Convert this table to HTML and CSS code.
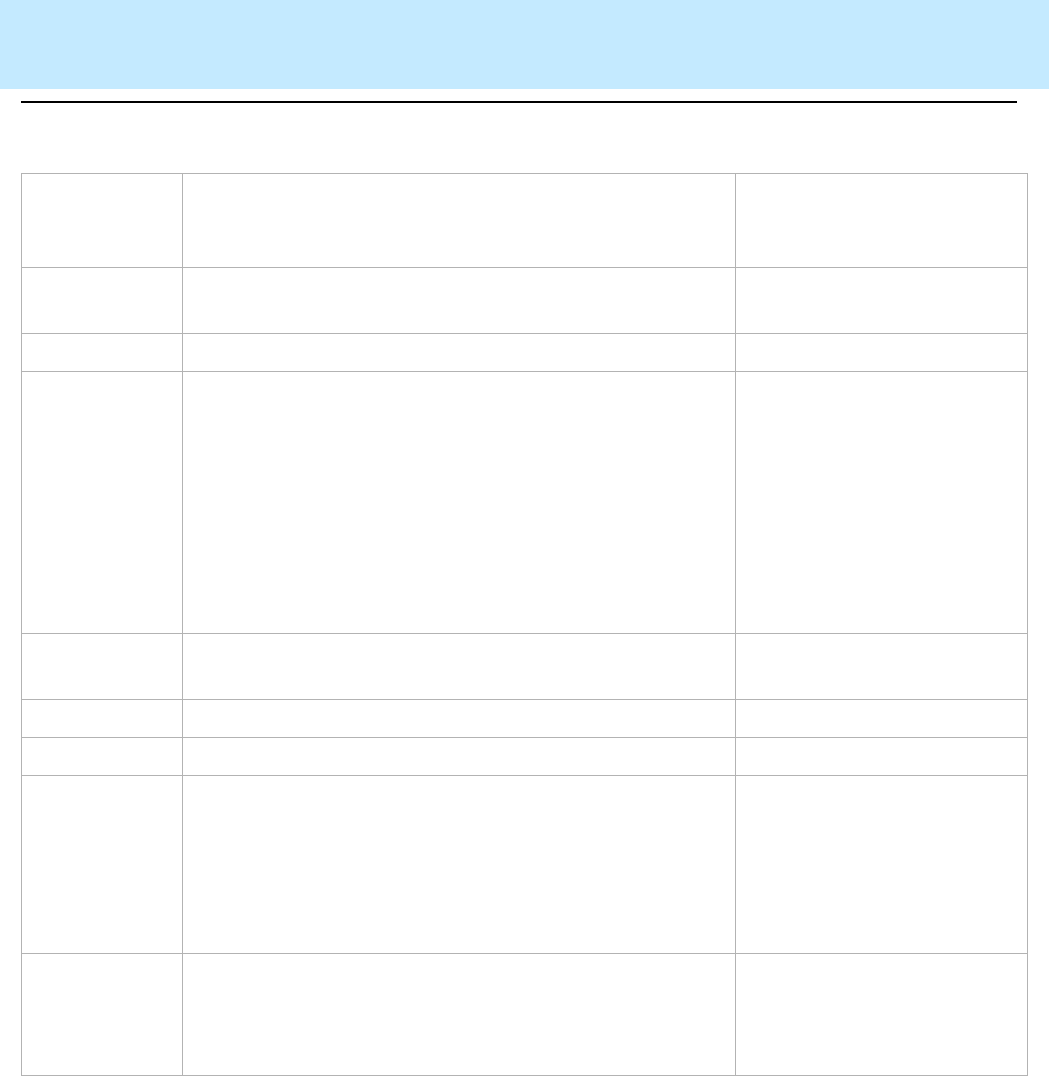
FILE: index.html
```html
<!DOCTYPE html>
<html lang="en">
<head>
    <meta charset="UTF-8">
    <title>Table</title>
    <link rel="stylesheet" href="styles.css">
</head>
<body>

<div class="top"></div>
<div class="rule"></div>

<table class="grid">
    <tr class="h94"><td class="c1"></td><td class="c2"></td><td class="c3"></td></tr>
    <tr class="h66"><td></td><td></td><td></td></tr>
    <tr class="h38"><td></td><td></td><td></td></tr>
    <tr class="h262"><td></td><td></td><td></td></tr>
    <tr class="h66"><td></td><td></td><td></td></tr>
    <tr class="h38"><td></td><td></td><td></td></tr>
    <tr class="h38"><td></td><td></td><td></td></tr>
    <tr class="h178"><td></td><td></td><td></td></tr>
    <tr class="h122"><td></td><td></td><td></td></tr>
</table>

</body>
</html>
```

FILE: styles.css
```css
*{
    margin:0;
    padding:0;
}
body{
    font-family: "Liberation Sans", Arial, sans-serif;
    background: #fff;
}
.top{
    height: 89px;
    background: #c4eaff;
}
.rule{
    width: 996px;
    height: 2px;
    background: #000;
    margin: 12px 0 0 21px;
}
.grid{
    border-collapse: collapse;
    table-layout: fixed;
    width: 1006px;
    margin: 70px 0 0 21px;
}
.grid td{
    border: 1px solid #b3b3b3;
    padding: 0;
}
.grid .c1{ width: 160px; }
.grid .c2{ width: 552px; }
.grid .c3{ width: 291px; }
.h38{ height: 38px; }
.h66{ height: 66px; }
.h94{ height: 94px; }
.h122{ height: 122px; }
.h178{ height: 178px; }
.h262{ height: 262px; }
```
